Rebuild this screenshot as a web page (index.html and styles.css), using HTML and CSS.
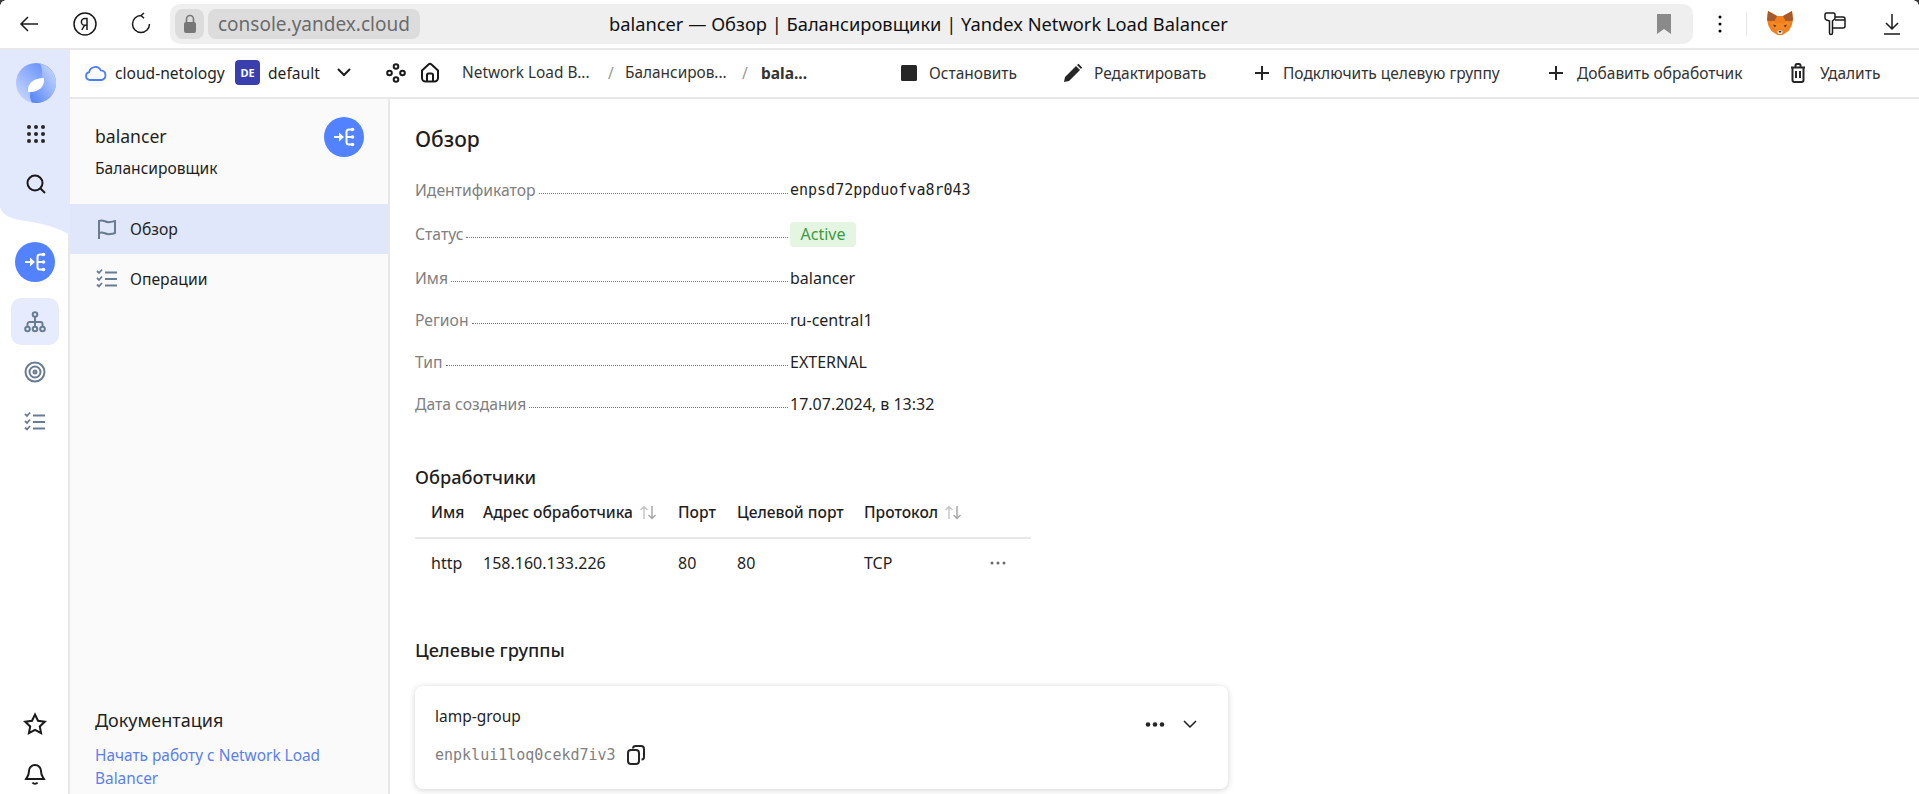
FILE: index.html
```html
<!DOCTYPE html>
<html lang="ru">
<head>
<meta charset="utf-8">
<title>balancer — Обзор</title>
<link rel="stylesheet" href="styles.css">
</head>
<body>
<header class="browser">
  <div class="b-nav">
    <svg class="b-ic" width="24" height="24" viewBox="0 0 24 24"><path d="M21 12H4M11 5l-7 7 7 7" class="ln"/></svg>
    <svg class="b-ic" width="24" height="24" viewBox="0 0 24 24"><circle cx="12" cy="12" r="11" class="ln"/><path d="M14 18V6.500h-2.200a3.300 3.300 0 0 0 0 6.800H14M11.500 13.300 8.800 18" class="ln"/></svg>
    <svg class="b-ic" width="24" height="24" viewBox="0 0 24 24"><path d="M12 3.500a8.500 8.500 0 1 0 8.500 8.500M12 3.500l3-2.500M12 3.500l3 2.800" class="ln"/></svg>
  </div>
  <div class="addr">
    <span class="lock"><svg width="14" height="20" viewBox="0 0 14 20"><rect x="1" y="8" width="12" height="11" rx="2" fill="#777"/><path d="M3.500 9V5a3.500 3.500 0 0 1 7 0v4" fill="none" stroke="#777" stroke-width="1.600"/></svg></span>
    <span class="url">console.yandex.cloud</span>
    <span class="page-title">balancer — Обзор | Балансировщики | Yandex Network Load Balancer</span>
    <svg width="14" height="20" viewBox="0 0 14 20"><path d="M0 0h14v20l-7-5-7 5z" fill="#8a8a8a"/></svg>
  </div>
  <div class="b-tools">
    <svg width="4" height="18" viewBox="0 0 4 18"><circle cx="2" cy="2" r="1.500"/><circle cx="2" cy="9" r="1.500"/><circle cx="2" cy="16" r="1.500"/></svg>
    <span class="b-sep"></span>
    <svg width="26" height="25" viewBox="0 0 26 25"><path d="M1 0l9 5h6l9-5 1 9-1.500 6-3 5-6 4h-5l-6-4-3-5L0 9z" fill="#f07f1e"/><path d="M1 0l9 5-2.500 5H1.500L0 9zM25 0l-9 5 2.500 5h6L26 9z" fill="#a8592a"/><path d="M3 13l3-3 4 3 3-1 3 1 4-3 3 3-3 4-2 1h-10l-2-1z" fill="#f78a24"/><path d="M6 13.500l3.500 1-2 2zM20 13.500l-3.500 1 2 2z" fill="#5b3a24"/><path d="M10 20l3-1 3 1-1 3h-4z" fill="#e6d7c7"/><path d="M11.500 20h3l-1.500 2z" fill="#2e221b"/></svg>
    <svg width="22" height="24" viewBox="0 0 22 24"><path d="M2.500 1h7A1.500 1.500 0 0 1 11 2.500V6a2 2 0 0 1-1 1.700L8.500 9v12a1.500 1.500 0 0 1-3 0V9L2 7.700A2 2 0 0 1 1 6V2.500A1.500 1.500 0 0 1 2.500 1zM11 5h8a2 2 0 0 1 2 2v7a2 2 0 0 1-2 2H8.500M11 8h10" class="ln"/></svg>
    <svg width="20" height="24" viewBox="0 0 20 24"><path d="M10 2v15M4 11l6 6 6-6M2 22h16" class="ln"/></svg>
  </div>
</header>

<div class="app">
  <nav class="rail">
    <div class="rail-top">
      <svg width="40" height="40" viewBox="0 0 40 40"><defs><linearGradient id="lgl" x1="1" y1="0" x2="0" y2="1"><stop offset="0" stop-color="#4f80fb"/><stop offset="1" stop-color="#d3dfff"/></linearGradient><linearGradient id="lgr" x1="0" y1="1" x2="1" y2="0"><stop offset="0" stop-color="#4f80fb"/><stop offset="1" stop-color="#d3dfff"/></linearGradient></defs><circle cx="20" cy="20" r="20" fill="url(#lgl)"/><path d="M24 .4A20 20 0 0 1 16 39.600C12 32 14 26 20 22 26 17 28 9 24 .4z" fill="url(#lgr)"/><path d="M12 29c-1-9 6-14 16-14 1 9-6 15-16 14z" fill="#fff"/></svg>
      <svg width="20" height="20" viewBox="0 0 20 20" class="dark"><circle cx="3" cy="3" r="2"/><circle cx="10" cy="3" r="2"/><circle cx="17" cy="3" r="2"/><circle cx="3" cy="10" r="2"/><circle cx="10" cy="10" r="2"/><circle cx="17" cy="10" r="2"/><circle cx="3" cy="17" r="2"/><circle cx="10" cy="17" r="2"/><circle cx="17" cy="17" r="2"/></svg>
      <svg width="22" height="22" viewBox="0 0 22 22"><circle cx="10" cy="10" r="7.500" class="ln2"/><path d="M15.500 15.500 20 20" class="ln2"/></svg>
    </div>
    <svg class="rail-curve" width="70" height="28" viewBox="0 0 70 28"><path d="M0 0c2 9 12 12 26 14 20 3 32 7 44 14V0z" fill="#e3e9fc"/></svg>
    <span class="circle rail-circle"><svg width="22" height="22" viewBox="0 0 22 22"><use href="#lb"/></svg></span>
    <span class="rail-item active"><svg width="22" height="22" viewBox="0 0 22 22" class="gi"><circle cx="11" cy="3.500" r="2.300"/><circle cx="3.500" cy="18" r="2.300"/><circle cx="11" cy="18" r="2.300"/><circle cx="18.500" cy="18" r="2.300"/><path d="M11 6v9.500M3.500 15.500V13a2 2 0 0 1 2-2h11a2 2 0 0 1 2 2v2.500"/></svg></span>
    <span class="rail-item"><svg width="22" height="22" viewBox="0 0 22 22" class="gi"><circle cx="11" cy="11" r="9.500"/><circle cx="11" cy="11" r="5.500"/><circle cx="11" cy="11" r="1.500"/></svg></span>
    <span class="rail-item"><svg width="22" height="22" viewBox="0 0 22 22" class="gi"><use href="#chk"/></svg></span>
    <span class="rail-spacer"></span>
    <span class="rail-foot"><svg width="24" height="24" viewBox="0 0 24 24"><path d="M12 2.500l3 6.300 6.800.9-5 4.700 1.300 6.800-6.100-3.300-6.100 3.300 1.300-6.800-5-4.700 6.800-.9z" class="ln2"/></svg></span>
    <span class="rail-foot"><svg width="24" height="24" viewBox="0 0 24 24"><path d="M12 3a6 6 0 0 0-6 6c0 5-2 6-3 8h18c-1-2-3-3-3-8a6 6 0 0 0-6-6zM9.500 20.500a3 3 0 0 0 5 0" class="ln2"/></svg></span>
  </nav>

  <div class="work">
    <div class="topbar">
      <div class="ctx">
        <svg width="22" height="17" viewBox="0 0 22 17"><path d="M5 16a4 4 0 0 1-.8-7.900A6.200 6.200 0 0 1 15.800 6.300 4.900 4.900 0 0 1 16.500 16z" fill="none" stroke="#4d7dfb" stroke-width="1.800"/></svg>
        <span class="ctx-name">cloud-netology</span>
        <span class="de">DE</span>
        <span class="ctx-folder">default</span>
        <svg class="chev" width="14" height="9" viewBox="0 0 14 9"><path d="M1 1l6 6 6-6" class="ln2"/></svg>
        <svg class="ctx-nodes" width="20" height="20" viewBox="0 0 20 20"><g class="ln2"><circle cx="10" cy="3.500" r="2.300"/><circle cx="3.500" cy="10" r="2.300"/><circle cx="16.500" cy="10" r="2.300"/><circle cx="10" cy="16.500" r="2.300"/></g></svg>
        <svg class="ctx-home" width="20" height="21" viewBox="0 0 20 21"><path d="M2 8.500 8.500 2.500a2.200 2.200 0 0 1 3 0L18 8.500V16a3.500 3.500 0 0 1-3.500 3.500h-9A3.500 3.500 0 0 1 2 16zM7 19.500V13a1.500 1.500 0 0 1 1.500-1.500h3A1.500 1.500 0 0 1 13 13v6.500" class="ln2"/></svg>
      </div>
      <div class="crumbs">
        <span class="crumb c1">Network Load B...</span><span class="slash">/</span>
        <span class="crumb c2">Балансиров...</span><span class="slash">/</span>
        <span class="crumb cur">bala...</span>
      </div>
      <div class="actions">
        <span class="act a1"><svg width="16" height="16" viewBox="0 0 16 16"><rect width="16" height="16" rx="1.500" fill="#262626"/></svg>Остановить</span>
        <span class="act a2"><svg width="20" height="20" viewBox="0 0 20 20"><path d="M1 19l1-5L13 3l4 4L6 18zM14 2l1.500-1.200 3.700 3.700L18 6z" fill="#262626"/></svg>Редактировать</span>
        <span class="act a3"><svg width="14" height="14" viewBox="0 0 14 14"><path d="M7 0v14M0 7h14" stroke="#262626" stroke-width="2" fill="none"/></svg>Подключить целевую группу</span>
        <span class="act a4"><svg width="14" height="14" viewBox="0 0 14 14"><path d="M7 0v14M0 7h14" stroke="#262626" stroke-width="2" fill="none"/></svg>Добавить обработчик</span>
        <span class="act a5"><svg width="16" height="20" viewBox="0 0 16 20"><path d="M1 4.500h14M5.500 4V2.500A1.500 1.500 0 0 1 7 1h2a1.500 1.500 0 0 1 1.500 1.500V4M2.500 4.500V17A2 2 0 0 0 4.500 19h7a2 2 0 0 0 2-2V4.500M6 8v7M10 8v7" class="ln2t"/></svg>Удалить</span>
      </div>
    </div>

    <div class="panels">
      <aside class="side">
        <div class="side-head">
          <div>
            <div class="side-name">balancer</div>
            <div class="side-type">Балансировщик</div>
          </div>
          <span class="circle"><svg width="22" height="22" viewBox="0 0 22 22"><use href="#lb"/></svg></span>
        </div>
        <a class="side-item on"><svg width="22" height="22" viewBox="0 0 22 22" class="gi"><path d="M3 21V3c5-2 6 2 11 1 2 0 4-1 5-1v12c-2 1-3 1-5 1-5 1-6-3-11-1"/></svg>Обзор</a>
        <a class="side-item"><svg width="22" height="22" viewBox="0 0 22 22" class="gi"><use href="#chk"/></svg>Операции</a>
        <div class="docs">
          <div class="docs-title">Документация</div>
          <a class="docs-link">Начать работу с Network Load Balancer</a>
        </div>
      </aside>

      <main class="main">
        <h2 class="h-main">Обзор</h2>
        <dl class="props">
          <div class="prop"><dt>Идентификатор</dt><dd class="mono">enpsd72ppduofva8r043</dd></div>
          <div class="prop p-status"><dt>Статус</dt><dd><span class="badge">Active</span></dd></div>
          <div class="prop"><dt>Имя</dt><dd>balancer</dd></div>
          <div class="prop"><dt>Регион</dt><dd>ru-central1</dd></div>
          <div class="prop"><dt>Тип</dt><dd>EXTERNAL</dd></div>
          <div class="prop"><dt>Дата создания</dt><dd>17.07.2024, в 13:32</dd></div>
        </dl>

        <h3 class="h-sec h-list">Обработчики</h3>
        <table class="tbl">
          <thead>
            <tr>
              <th class="c-a">Имя</th>
              <th class="c-b">Адрес обработчика<svg class="sort" width="18" height="15" viewBox="0 0 18 15"><path d="M5 14V2M1.500 5 5 1.500 8.500 5" class="s1"/><path d="M13 1v12M9.500 10 13 13.500 16.500 10" class="s2"/></svg></th>
              <th class="c-c">Порт</th>
              <th class="c-d">Целевой порт</th>
              <th class="c-e">Протокол<svg class="sort" width="18" height="15" viewBox="0 0 18 15"><path d="M5 14V2M1.500 5 5 1.500 8.500 5" class="s1"/><path d="M13 1v12M9.500 10 13 13.500 16.500 10" class="s2"/></svg></th>
              <th class="c-f"></th>
            </tr>
          </thead>
          <tbody>
            <tr>
              <td class="c-a">http</td><td>158.160.133.226</td><td>80</td><td>80</td><td>TCP</td>
              <td><svg width="16" height="4" viewBox="0 0 16 4" class="g6"><circle cx="2" cy="2" r="1.500"/><circle cx="8" cy="2" r="1.500"/><circle cx="14" cy="2" r="1.500"/></svg></td>
            </tr>
          </tbody>
        </table>

        <h3 class="h-sec h-groups">Целевые группы</h3>
        <section class="card">
          <div>
            <div class="card-name">lamp-group</div>
            <div class="card-id"><span class="mono-sm">enpklui1loq0cekd7iv3</span>
              <svg width="18" height="20" viewBox="0 0 18 20"><rect x="1" y="5" width="11" height="14" rx="3" class="ln2t"/><path d="M6 3.500A2.500 2.500 0 0 1 8.500 1H14a3 3 0 0 1 3 3v8a2.500 2.500 0 0 1-2.500 2.500" class="ln2t"/></svg>
            </div>
          </div>
          <div class="card-tools">
            <svg width="20" height="5" viewBox="0 0 20 5" class="dark"><circle cx="3" cy="2.500" r="2.300"/><circle cx="10" cy="2.500" r="2.300"/><circle cx="17" cy="2.500" r="2.300"/></svg>
            <svg width="14" height="9" viewBox="0 0 14 9"><path d="M1 1l6 6 6-6" class="ln"/></svg>
          </div>
        </section>
      </main>
    </div>
  </div>
</div>

<svg class="defs" width="0" height="0">
  <symbol id="lb" viewBox="0 0 22 22"><path d="M1 11h7" fill="none" stroke="#fff" stroke-width="2"/><path d="M6 6.500 11 11l-5 4.500z" fill="#fff"/><path d="M19 3.500h-3a2.500 2.500 0 0 0-2.500 2.500v10a2.500 2.500 0 0 0 2.500 2.500h3M13.500 11H19" fill="none" stroke="#fff" stroke-width="2"/><circle cx="19.500" cy="3.500" r="1.800" fill="#fff"/><circle cx="19.500" cy="11" r="1.800" fill="#fff"/><circle cx="19.500" cy="18.500" r="1.800" fill="#fff"/></symbol>
  <symbol id="chk" viewBox="0 0 22 22"><path d="M9 4.500h12M9 11h12M9 17.500h12" stroke-width="2"/><path d="M1 3l2 2 3-3.500M1 10l2 2 3-3.500M1 16.500l2 2 3-3.500" stroke-width="1.800"/></symbol>
</svg>
</body>
</html>
```

FILE: styles.css
```css
* { box-sizing: border-box; }
html, body { margin: 0; height: 794px; overflow: hidden; background: #fff; }
body { font: 15.5px/20px "Noto Sans", "Open Sans", sans-serif; color: #1f1f1f; }
svg { display: block; flex: none; }
.defs { position: absolute; }
.ln { fill: none; stroke: #1a1a1a; stroke-width: 1.500; }
.ln2 { fill: none; stroke: #1a1a1a; stroke-width: 2; }
.ln2t { fill: none; stroke: #262626; stroke-width: 2; }
.dark { fill: #262626; }
.g6 { fill: #6b6b6b; }
.gi { fill: none; stroke: #687d93; stroke-width: 2; }

.browser { height: 50px; display: flex; align-items: center; border-bottom: 2px solid #e8e8e8; padding: 0 16px 1px 17px;
  background:
    radial-gradient(circle at 6px 6px, transparent 5.500px, #3a3a3a 6px) left top / 6px 6px no-repeat,
    radial-gradient(circle at 0 6px, transparent 5.500px, #3a3a3a 6px) right top / 6px 6px no-repeat; }
.b-nav { display: flex; gap: 32px; width: 153px; }
.addr { width: 1523px; height: 40px; background: #efefef; border-radius: 10px; display: flex; align-items: center; padding: 0 22px 0 5px; }
.lock { width: 29px; height: 30px; background: #dcdcdc; border-radius: 8px; display: flex; align-items: center; justify-content: center; margin-right: 4px; }
.url { width: 212px; height: 30px; background: #dcdcdc; border-radius: 8px; padding-left: 10px; font-size: 19px; line-height: 30px; color: #6b6b6b; white-space: nowrap; }
.page-title { flex: 1; padding-left: 189px; font-size: 18.300px; white-space: nowrap; color: #111; }
.b-tools { display: flex; align-items: center; margin-left: 25px; }
.b-sep { width: 1px; height: 24px; background: #e6e6e6; margin: 0 20px 0 24px; }
.b-tools svg:nth-of-type(3) { margin-left: 31px; }
.b-tools svg:nth-of-type(4) { margin-left: 36px; }

.app { height: 744px; display: flex; }
.rail { width: 70px; padding-left: 2px; border-right: 2px solid #e8e8e8; display: flex; flex-direction: column; align-items: center; flex: none; }
.rail-top { flex: none; width: 70px; margin-left: -2px; margin-right: -2px; padding-left: 2px; height: 157px; background: #e3e9fc; display: flex; flex-direction: column; align-items: center; padding-top: 13px; }
.rail-top svg:nth-child(2) { margin-top: 21px; }
.rail-top svg:nth-child(3) { margin-top: 29px; }
.rail-curve { margin: 0 -2px; }
.circle { width: 40px; height: 40px; border-radius: 50%; background: #5282ff; display: flex; align-items: center; justify-content: center; flex: none; }
.rail-circle { margin-top: 7px; margin-bottom: 16px; }
.rail-item { width: 48px; height: 47px; margin-bottom: 3px; border-radius: 10px; display: flex; align-items: center; justify-content: center; }
.rail-item.active { background: #e6ecfd; }
.rail-spacer { flex: 1; }
.rail-foot { height: 50px; display: flex; align-items: center; justify-content: center; }
.rail-foot:last-child { margin-bottom: -5px; }

.work { flex: 1; min-width: 0; display: flex; flex-direction: column; }
.topbar { height: 49px; padding-bottom: 2px; border-bottom: 2px solid #e8e8e8; display: flex; align-items: center; flex: none; }
.ctx { display: flex; align-items: center; width: 392px; padding-left: 15px; }
.ctx-name { margin-left: 8px; width: 120px; white-space: nowrap; font-size: 15.600px; }
.de { width: 25px; height: 25px; background: #3a3fb0; color: #fff; border-radius: 4px; font-size: 11px; font-weight: 700; line-height: 25px; text-align: center; }
.ctx-folder { margin-left: 8px; width: 69px; font-size: 15.600px; }
.ctx-nodes { margin-left: 35px; }
.ctx-home { margin-left: 14px; }
.crumbs { display: flex; align-items: center; width: 439px; white-space: nowrap; }
.crumb { font-size: 15.400px; color: #333; }
.c1 { width: 146px; }
.slash { color: #999; width: 17px; }
.c2 { width: 117px; }
.cur { font-weight: 700; font-size: 15.500px; margin-left: 2px; }
.actions { display: flex; align-items: center; white-space: nowrap; color: #333; }
.act { display: flex; align-items: center; font-size: 15.500px; }
.a1 { width: 162px; gap: 12px; }
.a2 { width: 192px; gap: 11px; }
.a3 { width: 294px; gap: 14px; }
.a4 { width: 241px; gap: 14px; }
.a5 { gap: 14px; }

.panels { flex: 1; min-height: 0; display: flex; }
.side { width: 320px; background: #fafafa; border-right: 2px solid #e8e8e8; flex: none; display: flex; flex-direction: column; }
.side-head { height: 105px; padding: 18px 24px 0 25px; display: flex; justify-content: space-between; align-items: flex-start; }
.side-name { font-size: 17.600px; line-height: 28px; margin-top: 5px; }
.side-type { font-size: 15.600px; line-height: 20px; margin-top: 8px; }
.side-item { height: 50px; display: flex; align-items: center; gap: 12px; padding-left: 26px; font-size: 15.700px; }
.side-item.on { background: #e0e7fa; }
.docs { margin-top: auto; padding: 0 25px 4px; }
.docs-title { font-size: 18px; line-height: 24px; margin-bottom: 12px; }
.docs-link { display: block; color: #5b7ff0; font-size: 15.400px; line-height: 23px; width: 260px; }

.main { flex: 1; padding: 0 0 0 25px; min-width: 0; }
.h-main { margin: 0; font-size: 21px; font-weight: 500; line-height: 28px; padding-top: 26px; box-sizing: content-box; }
.props { margin: 21px 0 0; }
.prop { display: flex; height: 32px; margin-bottom: 10px; align-items: center; }
.prop.p-status { margin-top: 12px; margin-bottom: 12px; }
.prop dt { width: 375px; display: flex; align-items: center; color: #808080; font-size: 15.700px; white-space: nowrap; }
.prop dt::after { content: ""; flex: 1; margin: 6px 2px 0 3px; border-bottom: 1px dotted #777; }
.prop dd { margin: 0; font-size: 16px; }
.prop dd.mono { font: 15px/20px "DejaVu Sans Mono", monospace; }
.badge { display: inline-block; height: 25px; line-height: 25px; width: 66px; text-align: center; background: #e4f6e2; color: #3e9a42; border-radius: 4px; }

.h-sec { margin: 0; font-size: 18.200px; font-weight: 500; line-height: 24px; }
.h-list { margin-top: 45px; }
.tbl { border-collapse: collapse; table-layout: fixed; width: 616px; font-size: 16px; }
.tbl th { font-weight: 500; font-size: 15.600px; text-align: left; height: 49px; border-bottom: 2px solid #e8e8e8; white-space: nowrap; padding: 0 0 3px; }
.tbl td { height: 48px; padding: 0; }
.c-a { width: 68px; padding-left: 16px !important; }
.c-b { width: 195px; }
.c-c { width: 59px; }
.c-d { width: 127px; }
.c-e { width: 126px; }
.sort { display: inline-block; vertical-align: -2px; margin-left: 6px; }
.s1 { fill: none; stroke: #c8c8c8; stroke-width: 1.500; }
.s2 { fill: none; stroke: #a8a8a8; stroke-width: 1.500; }
.h-groups { margin-top: 52px; }
.card { width: 813px; height: 103px; margin-top: 24px; border-radius: 8px; background: #fff; box-shadow: 0 1px 6px rgba(0,0,0,.18); padding: 20px; display: flex; justify-content: space-between; }
.card-name { font-size: 15.500px; line-height: 20px; }
.card-id { display: flex; align-items: center; gap: 11px; margin-top: 19px; height: 20px; }
.mono-sm { font: 15px/20px "DejaVu Sans Mono", monospace; color: #808080; }
.card-tools { display: flex; align-items: center; gap: 18px; height: 36px; padding-right: 11px; }
```
